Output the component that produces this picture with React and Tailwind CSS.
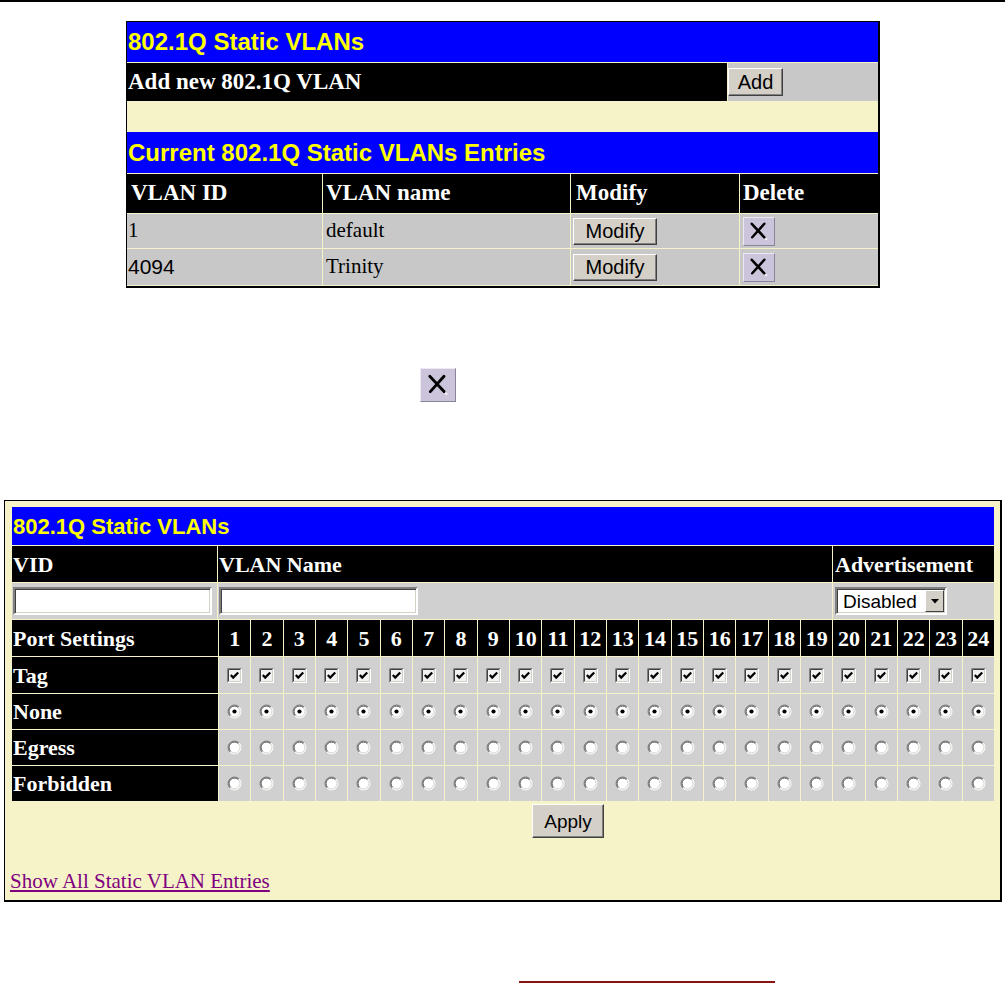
const sans = "font-['Liberation_Sans',Arial,sans-serif]";
const serif = "font-['Liberation_Serif','Times_New_Roman',serif]";

function WinButton({ children, className = "" }) {
  return (
    <button
      type="button"
      className={`${sans} flex items-center justify-center bg-[#d4d0c8] text-black leading-none border border-t-white border-l-white border-b-[#404040] border-r-[#404040] shadow-[inset_-1px_-1px_0_#808080] ${className}`}
    >
      {children}
    </button>
  );
}

function DeleteIcon({ className = "" }) {
  return (
    <span
      className={`flex items-center justify-center bg-[#cbc4da] border border-t-[#ece8f4] border-l-[#ece8f4] border-b-[#8a8498] border-r-[#8a8498] ${className}`}
    >
      <svg viewBox="0 0 31 28" className="w-full h-full">
        <path d="M8 6 L21 20" stroke="#000" strokeWidth="2.6" strokeLinecap="round" />
        <path d="M21 6 L8.5 20" stroke="#000" strokeWidth="2.6" strokeLinecap="round" />
        <circle cx="23" cy="22" r="1.2" fill="#f4f2f8" />
      </svg>
    </span>
  );
}

function CheckBox() {
  return (
    <svg width="15" height="15" viewBox="0 0 15 15">
      <rect x="0" y="0" width="15" height="15" fill="#ffffff" />
      <path d="M0.5 14.5 V0.5 H14.5" stroke="#808080" fill="none" />
      <path d="M1.5 13.5 V1.5 H13.5" stroke="#404040" fill="none" />
      <path d="M1.5 13.5 H13.5 V1.5" stroke="#d4d0c8" fill="none" />
      <rect x="2" y="2" width="11" height="11" fill="#f2f2f2" />
      <path d="M3.8 7 L6.2 9.6 L11.2 4.4" stroke="#000" strokeWidth="2.2" fill="none" />
    </svg>
  );
}

function Radio({ checked }) {
  return (
    <svg width="15" height="15" viewBox="0 0 15 15">
      <circle cx="7.5" cy="7.5" r="6.5" fill="#ffffff" />
      <path d="M2.9 12.1 A6.5 6.5 0 0 1 12.1 2.9" stroke="#808080" fill="none" />
      <path d="M12.1 2.9 A6.5 6.5 0 0 1 2.9 12.1" stroke="#ffffff" fill="none" />
      <path d="M3.6 11.4 A5.5 5.5 0 0 1 11.4 3.6" stroke="#404040" fill="none" />
      <path d="M11.4 3.6 A5.5 5.5 0 0 1 3.6 11.4" stroke="#d4d0c8" fill="none" />
      {checked && <circle cx="7.5" cy="7.5" r="2.1" fill="#000" />}
    </svg>
  );
}

const ports = Array.from({ length: 24 }, (_, i) => i + 1);

export default function App() {
  const entries = [
    { id: "1", name: "default", idSans: false },
    { id: "4094", name: "Trinity", idSans: true },
  ];

  return (
    <div className="w-[1005px] h-[983px] bg-white flex flex-col">
      <div className="h-[2px] bg-black" />

      {/* current entries panel */}
      <div className="ml-[126px] mt-[19px] w-[754px] border-l border-t border-r-2 border-b-2 border-black bg-[#f7f3c8] pb-px">
        <div className="flex flex-col gap-px">
          <div className={`${sans} h-[40px] bg-[#0000ff] flex items-center pl-px text-[24px] font-bold text-[#ffff00]`}>
            802.1Q Static VLANs
          </div>
          <div className="grid grid-cols-[600px_1fr] gap-px h-[38px]">
            <div className={`${serif} bg-black text-white font-bold text-[23px] flex items-center pl-px`}>
              Add new 802.1Q VLAN
            </div>
            <div className="bg-[#c8c8c8] flex items-center">
              <WinButton className="w-[55px] h-[28px] text-[20px]">Add</WinButton>
            </div>
          </div>
          <div className="h-[29px]" />
          <div className={`${sans} h-[41px] bg-[#0000ff] flex items-center pl-px text-[24px] font-bold text-[#ffff00]`}>
            Current 802.1Q Static VLANs Entries
          </div>
          <div className={`${serif} grid grid-cols-[195px_247px_168px_1fr] gap-px h-[39px] text-white font-bold text-[23px]`}>
            <div className="bg-black flex items-center pl-[4px]">VLAN ID</div>
            <div className="bg-black flex items-center pl-[3px]">VLAN name</div>
            <div className="bg-black flex items-center pl-[5px]">Modify</div>
            <div className="bg-black flex items-center pl-[3px]">Delete</div>
          </div>
          {entries.map((e, i) => (
            <div
              key={e.id}
              className={`grid grid-cols-[195px_247px_168px_1fr] gap-px ${i === 0 ? "h-[34px]" : "h-[36px]"} text-black`}
            >
              <div className={`bg-[#c8c8c8] flex items-center pl-px text-[21px] ${e.idSans ? sans : serif}`}>{e.id}</div>
              <div className={`${serif} bg-[#c8c8c8] flex items-center pl-[3px] text-[21px]`}>{e.name}</div>
              <div className="bg-[#c8c8c8] flex items-center pl-[2px]">
                <WinButton className="w-[84px] h-[27px] text-[20px]">Modify</WinButton>
              </div>
              <div className="bg-[#c8c8c8] flex items-center pl-[3px]">
                <DeleteIcon className="w-[32px] h-[29px]" />
              </div>
            </div>
          ))}
        </div>
      </div>

      <div className="ml-[420px] mt-[80px]">
        <DeleteIcon className="w-[36px] h-[34px]" />
      </div>

      {/* add VLAN panel */}
      <div className="ml-[4px] mt-[98px] w-[998px] h-[402px] border-l border-t border-r-2 border-b-2 border-black bg-[#f7f3c8] pt-[6px] flex flex-col">
        <div className="ml-[7px] w-[982px] flex flex-col gap-px">
          <div className={`${sans} h-[38px] bg-[#0000ff] flex items-center pl-px text-[22px] font-bold text-[#ffff00]`}>
            802.1Q Static VLANs
          </div>
          <div className={`${serif} grid grid-cols-[205px_614px_1fr] gap-px h-[36px] text-white font-bold text-[22px]`}>
            <div className="bg-black flex items-center pl-px">VID</div>
            <div className="bg-black flex items-center pl-px">VLAN Name</div>
            <div className="bg-black flex items-center pl-[2px]">Advertisement</div>
          </div>
          <div className="grid grid-cols-[205px_614px_1fr] gap-px h-[36px]">
            <div className="bg-[#d0d0d0] flex items-center pl-px">
              <div className="w-[199px] h-[28px] bg-white border-2 border-t-[#808080] border-l-[#808080] border-b-white border-r-white shadow-[inset_1px_1px_0_#404040,inset_-1px_-1px_0_#d4d0c8]" />
            </div>
            <div className="bg-[#d0d0d0] flex items-center pl-px">
              <div className="w-[199px] h-[28px] bg-white border-2 border-t-[#808080] border-l-[#808080] border-b-white border-r-white shadow-[inset_1px_1px_0_#404040,inset_-1px_-1px_0_#d4d0c8]" />
            </div>
            <div className="bg-[#d0d0d0] flex items-center pl-[2px]">
              <div className="w-[112px] h-[28px] bg-white flex items-stretch border-2 border-t-[#808080] border-l-[#808080] border-b-white border-r-white shadow-[inset_1px_1px_0_#404040,inset_-1px_-1px_0_#d4d0c8] p-px">
                <span className={`${sans} flex-1 flex items-center pl-[5px] text-[19px] leading-none text-black`}>Disabled</span>
                <span className="w-[19px] flex items-center justify-center bg-[#d4d0c8] border border-t-white border-l-white border-b-[#404040] border-r-[#404040]">
                  <svg width="8" height="5" viewBox="0 0 8 5">
                    <path d="M0 0 H8 L4 4.5 Z" fill="#000" />
                  </svg>
                </span>
              </div>
            </div>
          </div>
          <div className={`${serif} grid grid-cols-[206px_repeat(24,minmax(0,1fr))] gap-px h-[36px] text-white font-bold text-[22px]`}>
            <div className="bg-black flex items-center pl-px">Port Settings</div>
            {ports.map((p) => (
              <div key={p} className="bg-black flex items-center justify-center">{p}</div>
            ))}
          </div>
          {[
            { label: "Tag", kind: "check", h: "h-[36px]" },
            { label: "None", kind: "on", h: "h-[35px]" },
            { label: "Egress", kind: "off", h: "h-[35px]" },
            { label: "Forbidden", kind: "off", h: "h-[35px]" },
          ].map((row) => (
            <div key={row.label} className={`grid grid-cols-[206px_repeat(24,minmax(0,1fr))] gap-px ${row.h}`}>
              <div className={`${serif} bg-black text-white font-bold text-[22px] flex items-center pl-px`}>{row.label}</div>
              {ports.map((p) => (
                <div key={p} className="bg-[#d0d0d0] flex items-center justify-center">
                  {row.kind === "check" ? <CheckBox /> : <Radio checked={row.kind === "on"} />}
                </div>
              ))}
            </div>
          ))}
        </div>

        <div className="ml-[527px] mt-[3px]">
          <WinButton className="w-[72px] h-[34px] text-[19px]">Apply</WinButton>
        </div>

        <a href="#" className={`${serif} ml-[5px] mt-[30px] text-[21px] leading-[26px] text-[#800080] underline self-start`}>
          Show All Static VLAN Entries
        </a>
      </div>

      <div className="ml-[519px] mt-[79px] w-[256px] h-[2px] bg-[#8b1010]" />
    </div>
  );
}
